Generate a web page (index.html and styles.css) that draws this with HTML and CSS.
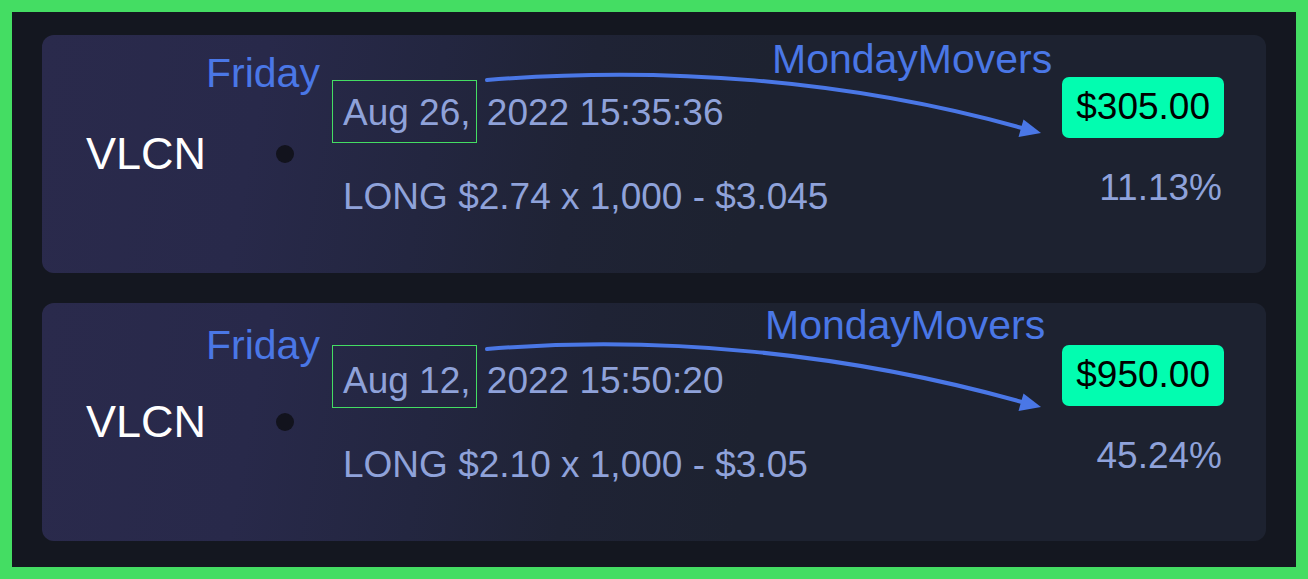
FILE: index.html
```html
<!DOCTYPE html>
<html lang="en">
<head>
<meta charset="utf-8">
<title>Trades</title>
<link rel="stylesheet" href="styles.css">
</head>
<body>
<div class="frame">
  <div class="card">
    <svg class="arrow" viewBox="0 0 1224 238" width="1224" height="238" aria-hidden="true">
      <path d="M445,45 C620,31 805,44 980,93" fill="none" stroke="#4a77e6" stroke-width="4" stroke-linecap="round"/>
      <polygon points="999,98 976.5,102 981.5,84.5" fill="#4a77e6"/>
    </svg>
    <span class="note note-day">Friday</span>
    <span class="note note-tag">MondayMovers</span>
    <div class="ticker">VLCN</div>
    <span class="dot"></span>
    <div class="details">
      <div class="line"><span class="day-box">Aug 26,</span> 2022 15:35:36</div>
      <div class="line">LONG $2.74 x 1,000 - $3.045</div>
    </div>
    <div class="result">
      <span class="badge">$305.00</span>
      <span class="pct">11.13%</span>
    </div>
  </div>

  <div class="card card-alt">
    <svg class="arrow" viewBox="0 0 1224 238" width="1224" height="238" aria-hidden="true">
      <path d="M445,46 C620,32 805,50 980,99" fill="none" stroke="#4a77e6" stroke-width="4" stroke-linecap="round"/>
      <polygon points="999,104 976.5,108 981.5,90.5" fill="#4a77e6"/>
    </svg>
    <span class="note note-day">Friday</span>
    <span class="note note-tag">MondayMovers</span>
    <div class="ticker">VLCN</div>
    <span class="dot"></span>
    <div class="details">
      <div class="line"><span class="day-box">Aug 12,</span> 2022 15:50:20</div>
      <div class="line">LONG $2.10 x 1,000 - $3.05</div>
    </div>
    <div class="result">
      <span class="badge">$950.00</span>
      <span class="pct">45.24%</span>
    </div>
  </div>
</div>
</body>
</html>
```
FILE: styles.css
```css
html, body {
  margin: 0;
  padding: 0;
}

body {
  width: 1308px;
  height: 579px;
  font-family: "Liberation Sans", Arial, sans-serif;
  background: #44dd63;
}

.frame {
  box-sizing: border-box;
  width: 1308px;
  height: 579px;
  border: 12px solid #44dd63;
  background: #141720;
  padding: 23px 30px 26px;
  display: flex;
  flex-direction: column;
  gap: 30px;
}

.card {
  position: relative;
  box-sizing: border-box;
  height: 238px;
  border-radius: 12px;
  padding: 0 42px 0 44px;
  display: flex;
  align-items: center;
  background: linear-gradient(100deg, #2a2a4c 0%, #28294a 18%, #232640 32%, #1f2335 44%, #1d2230 58%, #1d2230 100%);
}

.arrow {
  position: absolute;
  left: 0;
  top: 0;
  width: 1224px;
  height: 238px;
  pointer-events: none;
  overflow: visible;
}

.note {
  position: absolute;
  font-size: 41px;
  line-height: 41px;
  color: #4a77e6;
  white-space: nowrap;
}

.note-day {
  left: 164px;
  top: 18px;
}

.note-tag {
  left: 730px;
  top: 4px;
}

.card-alt .note-day {
  top: 22px;
}

.card-alt .note-tag {
  left: 723px;
  top: 2px;
}

.ticker {
  flex: 0 0 190px;
  font-size: 45px;
  line-height: 52px;
  color: #ffffff;
}

.dot {
  flex: none;
  width: 18px;
  height: 18px;
  border-radius: 50%;
  background: #12131d;
}

.details {
  flex: 1;
  margin-left: 49px;
  padding-top: 2px;
  display: flex;
  flex-direction: column;
  gap: 40px;
  font-size: 37px;
  line-height: 44px;
  color: #8fa2da;
  white-space: nowrap;
}

.day-box {
  border: 1px solid #44dd63;
  margin-left: -11px;
  padding: 11px 5px 9px 10px;
}

.card-alt .day-box {
  padding-top: 14px;
  padding-bottom: 6px;
}

.result {
  flex: none;
  display: flex;
  flex-direction: column;
  align-items: flex-end;
  gap: 28px;
  margin-bottom: 21px;
  font-size: 37px;
  line-height: 44px;
}

.badge {
  background: #02fdb0;
  color: #000000;
  border-radius: 7px;
  padding: 8px 14px 9px;
}

.pct {
  color: #8fa2da;
  margin-right: 2px;
}
```
